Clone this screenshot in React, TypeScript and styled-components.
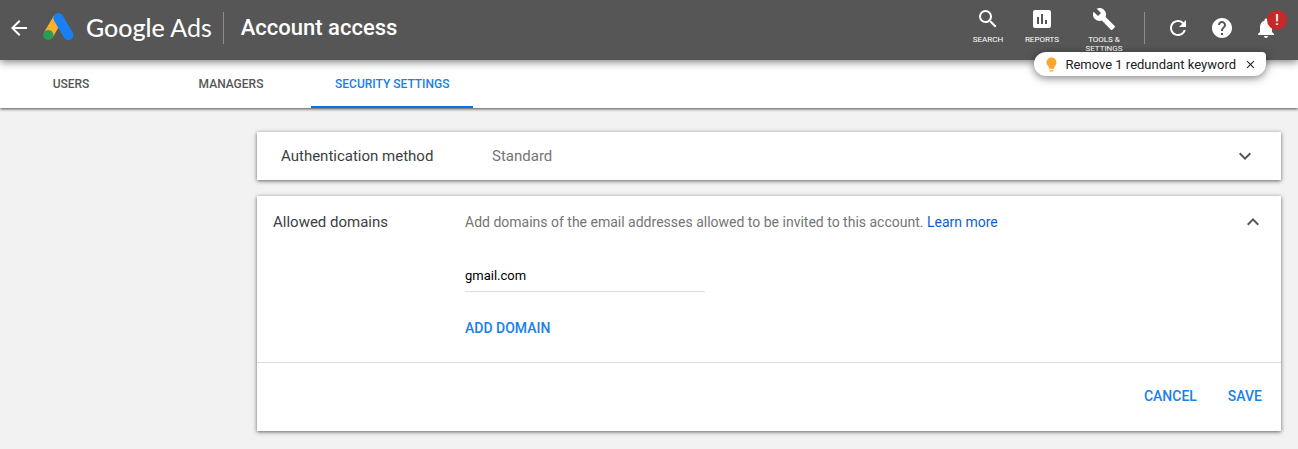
import React, { useState } from "react";
import styled, { createGlobalStyle } from "styled-components";
import {
  MdArrowBack, MdSearch, MdInsertChart, MdBuild, MdRefresh, MdHelp,
  MdNotifications, MdLightbulb, MdClose, MdKeyboardArrowDown, MdKeyboardArrowUp,
} from "react-icons/md";

const GlobalStyle = createGlobalStyle`
  *, *::before, *::after { box-sizing: border-box; }
  html { background: #f2f2f2; }
  body { margin: 0; font-family: Roboto, sans-serif; color: #3c4043; }
  button, input { font-family: inherit; }
  svg { display: block; flex: none; }
`;

const Header = styled.header`
  position: relative;
  z-index: 2;
  display: flex;
  align-items: flex-start;
  justify-content: space-between;
  height: 60px;
  padding: 0 20px 0 7px;
  background: #565656;
  color: #fff;
  box-shadow: 0 2px 8px rgba(0, 0, 0, 0.5);
`;

const HeaderGroup = styled.div`
  display: flex;
  align-items: center;
  height: 56px;
`;

const IconButton = styled.button`
  display: flex;
  align-items: center;
  justify-content: center;
  padding: 0;
  border: 0;
  background: none;
  color: inherit;
  cursor: pointer;
`;

const Brand = styled.a`
  display: flex;
  align-items: center;
  gap: 12px;
  margin-left: 11px;
  color: #fff;
  text-decoration: none;
`;

const Wordmark = styled.span`
  padding-bottom: 2px;
  font: 400 25px/32px Lato, sans-serif;
  white-space: nowrap;
`;

const WordmarkStrong = styled.span`
  font-weight: 500;
`;

const Divider = styled.span`
  width: 1px;
  height: 32px;
  background: #8c8c8c;
`;

const Title = styled.h1`
  margin: 0 0 0 17px;
  font-size: 22px;
  line-height: 32px;
  font-weight: 500;
  white-space: nowrap;
`;

const BrandDivider = styled(Divider)`
  margin-left: 11px;
`;

const Tools = styled.nav`
  display: flex;
  align-items: flex-start;
  height: 56px;
  padding: 7px 6px 0 0;
`;

const Tool = styled.button<{ $width: number }>`
  display: flex;
  flex-direction: column;
  align-items: center;
  gap: 4px;
  width: ${(p) => p.$width}px;
  padding: 0;
  border: 0;
  background: none;
  color: #fff;
  font-size: 8px;
  line-height: 9px;
  text-transform: uppercase;
  cursor: pointer;
`;

const Actions = styled.div`
  display: flex;
  align-items: center;
  gap: 20px;
  padding-left: 21px;
`;

const Bell = styled(IconButton)`
  position: relative;
`;

const Badge = styled.span`
  position: absolute;
  left: 13px;
  top: -6px;
  width: 20px;
  height: 20px;
  border-radius: 50%;
  background: #c62a28;
  font-size: 15px;
  line-height: 20px;
  font-weight: 500;
  text-align: center;
`;

const Notice = styled.div`
  position: absolute;
  top: 52px;
  right: 32px;
  display: flex;
  align-items: center;
  height: 24px;
  padding: 0 9px;
  border-radius: 12px 4px 12px 12px;
  background: #fff;
  color: #202124;
  font-size: 13px;
  white-space: nowrap;
  box-shadow: 0 2px 8px rgba(0, 0, 0, 0.5);
`;

const NoticeText = styled.span`
  margin: 0 8px 0 5px;
`;

const TabBar = styled.nav`
  position: relative;
  z-index: 1;
  display: flex;
  height: 48px;
  background: #fff;
  box-shadow: 0 1px 3px rgba(0, 0, 0, 0.7);
`;

const TabList = styled.div`
  display: flex;
  margin-left: -9px;
`;

const Tab = styled.a<{ $active?: boolean }>`
  display: flex;
  justify-content: center;
  min-width: 160px;
  padding: 0 24px;
  border-bottom: 2px solid ${(p) => (p.$active ? "#0b6fdc" : "transparent")};
  color: ${(p) => (p.$active ? "#1a80ea" : "#565656")};
  font-size: 12px;
  line-height: 48px;
  font-weight: 500;
  text-decoration: none;
  text-transform: uppercase;
  white-space: nowrap;
`;

const Main = styled.main`
  display: flex;
  flex-direction: column;
  gap: 16px;
  padding: 24px 17px 18px 257px;
`;

const Card = styled.section`
  background: #fff;
  box-shadow: 0 1px 4px rgba(0, 0, 0, 0.6);
`;

const Row = styled.div<{ $inset: number; $top: number; $label: number }>`
  display: grid;
  grid-template-columns: ${(p) => p.$label}px minmax(0, 1fr) 24px;
  align-items: start;
  padding: ${(p) => p.$top}px ${(p) => p.$inset}px 0;
  min-height: 48px;
`;

const CardTitle = styled.h2`
  margin: 0;
  font-size: 15px;
  line-height: 24px;
  font-weight: 400;
  white-space: nowrap;
`;

const Value = styled.p`
  margin: 0;
  color: #757575;
  font-size: 15px;
  line-height: 24px;
`;

const Description = styled.p`
  margin: 0;
  color: #757575;
  font-size: 14px;
  line-height: 24px;
`;

const Link = styled.a`
  color: #0b5fd0;
  text-decoration: none;
`;

const Toggle = styled(IconButton)`
  color: #565656;
`;

const Form = styled.form`
  display: flex;
  flex-direction: column;
`;

const Fields = styled.div`
  display: flex;
  flex-direction: column;
  align-items: flex-start;
`;

const DomainInput = styled.input`
  width: 240px;
  max-width: 100%;
  height: 32px;
  margin-top: 26px;
  padding: 0;
  border: 0;
  border-bottom: 1px solid #dadce0;
  outline: 0;
  background: none;
  color: #000;
  font-size: 13px;
`;

const TextButton = styled.button`
  padding: 0;
  border: 0;
  background: none;
  color: #1a80ea;
  font-size: 14px;
  line-height: 24px;
  font-weight: 500;
  text-transform: uppercase;
  cursor: pointer;
`;

const AddButton = styled(TextButton)`
  margin: 24px 0 22px;
`;

const Footer = styled.footer`
  display: flex;
  justify-content: flex-end;
  gap: 31px;
  padding: 21px 19px 23px;
  border-top: 1px solid #dadce0;
`;

function AdsLogo() {
  return (
    <svg width="32" height="30" viewBox="0 0 32 30" aria-hidden="true">
      <path d="M6.3 22 16.3 4.9" stroke="#fbb02d" strokeWidth="10" />
      <circle cx="6.3" cy="22" r="5.1" fill="#2a9d54" />
      <path d="M16.4 5.1 26.4 22.1" stroke="#1a7ff0" strokeWidth="10" strokeLinecap="round" />
    </svg>
  );
}

export default function App() {
  const [domain, setDomain] = useState("gmail.com");
  return (
    <>
      <GlobalStyle />
      <Header>
        <HeaderGroup>
          <IconButton aria-label="Back"><MdArrowBack size={24} /></IconButton>
          <Brand href="#home">
            <AdsLogo />
            <Wordmark>
              <WordmarkStrong>Google</WordmarkStrong> Ads
            </Wordmark>
          </Brand>
          <BrandDivider />
          <Title>Account access</Title>
        </HeaderGroup>
        <HeaderGroup>
          <Tools aria-label="Tools">
            <Tool $width={52}><MdSearch size={24} />Search</Tool>
            <Tool $width={56}><MdInsertChart size={24} />Reports</Tool>
            <Tool $width={68}><MdBuild size={24} />Tools &amp; Settings</Tool>
          </Tools>
          <Divider />
          <Actions>
            <IconButton aria-label="Refresh"><MdRefresh size={24} /></IconButton>
            <IconButton aria-label="Help"><MdHelp size={24} /></IconButton>
            <Bell aria-label="Notifications">
              <MdNotifications size={24} />
              <Badge>!</Badge>
            </Bell>
          </Actions>
        </HeaderGroup>
        <Notice role="status">
          <MdLightbulb size={17} color="#f9a825" />
          <NoticeText>Remove 1 redundant keyword</NoticeText>
          <IconButton aria-label="Dismiss"><MdClose size={13} /></IconButton>
        </Notice>
      </Header>
      <TabBar aria-label="Account access sections">
        <TabList>
          <Tab href="#users">Users</Tab>
          <Tab href="#managers">Managers</Tab>
          <Tab href="#security" $active aria-current="page">Security settings</Tab>
        </TabList>
      </TabBar>
      <Main>
        <Card>
          <Row $inset={24} $top={12} $label={211}>
            <CardTitle>Authentication method</CardTitle>
            <Value>Standard</Value>
            <Toggle aria-label="Expand authentication method"><MdKeyboardArrowDown size={24} /></Toggle>
          </Row>
        </Card>
        <Card>
          <Form onSubmit={(e) => e.preventDefault()}>
            <Row $inset={16} $top={14} $label={192}>
              <CardTitle>Allowed domains</CardTitle>
              <Fields>
                <Description>
                  Add domains of the email addresses allowed to be invited to this account.{" "}
                  <Link href="#learn">Learn more</Link>
                </Description>
                <DomainInput
                  aria-label="Allowed domain"
                  value={domain}
                  onChange={(e) => setDomain(e.target.value)}
                />
                <AddButton type="button">Add domain</AddButton>
              </Fields>
              <Toggle type="button" aria-label="Collapse allowed domains"><MdKeyboardArrowUp size={24} /></Toggle>
            </Row>
            <Footer>
              <TextButton type="button">Cancel</TextButton>
              <TextButton type="submit">Save</TextButton>
            </Footer>
          </Form>
        </Card>
      </Main>
    </>
  );
}
